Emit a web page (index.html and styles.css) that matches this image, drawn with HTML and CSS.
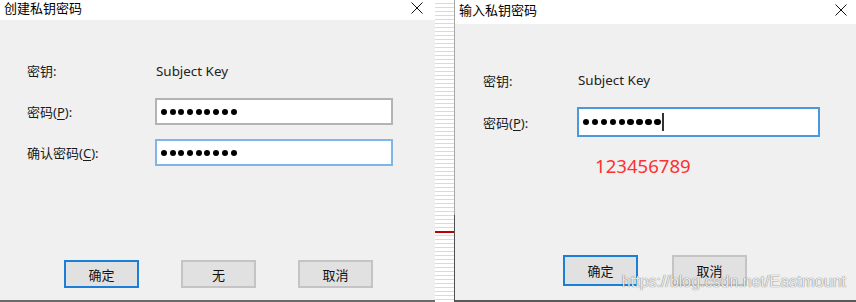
FILE: index.html
```html
<!DOCTYPE html>
<html lang="zh-CN">

<head>
    <meta charset="UTF-8">
    <meta name="viewport" content="width=device-width, initial-scale=1.0">
    <title>私钥密码</title>
    <link rel="stylesheet" href="styles.css">
</head>

<body>
    <div class="screen">
        <!-- 创建私钥密码 -->
        <div class="dialog create">
            <div class="titlebar">
                <span class="title">创建私钥密码</span>
                <svg class="close" width="12" height="12" viewBox="0 0 12 12">
                    <path d="M0.5 0.5 L11.5 11.5 M11.5 0.5 L0.5 11.5" stroke="#111" stroke-width="1" fill="none" />
                </svg>
            </div>
            <div class="body">
                <div class="fields">
                    <div class="label">密钥:</div>
                    <div class="value">Subject Key</div>
                    <div class="label">密码(<u>P</u>):</div>
                    <div class="field">
                        <span class="dot"></span><span class="dot"></span><span class="dot"></span>
                        <span class="dot"></span><span class="dot"></span><span class="dot"></span>
                        <span class="dot"></span><span class="dot"></span><span class="dot"></span>
                    </div>
                    <div class="label">确认密码(<u>C</u>):</div>
                    <div class="field focus">
                        <span class="dot"></span><span class="dot"></span><span class="dot"></span>
                        <span class="dot"></span><span class="dot"></span><span class="dot"></span>
                        <span class="dot"></span><span class="dot"></span><span class="dot"></span>
                    </div>
                </div>
                <div class="buttons">
                    <div class="btn default">确定</div>
                    <div class="btn">无</div>
                    <div class="btn">取消</div>
                </div>
            </div>
        </div>

        <div class="strip"></div>

        <!-- 输入私钥密码 -->
        <div class="dialog enter">
            <div class="titlebar">
                <span class="title">输入私钥密码</span>
                <svg class="close" width="12" height="12" viewBox="0 0 12 12">
                    <path d="M0.5 0.5 L11.5 11.5 M11.5 0.5 L0.5 11.5" stroke="#111" stroke-width="1" fill="none" />
                </svg>
            </div>
            <div class="body">
                <div class="fields">
                    <div class="label">密钥:</div>
                    <div class="value">Subject Key</div>
                    <div class="label">密码(<u>P</u>):</div>
                    <div class="field active">
                        <span class="dot"></span><span class="dot"></span><span class="dot"></span>
                        <span class="dot"></span><span class="dot"></span><span class="dot"></span>
                        <span class="dot"></span><span class="dot"></span><span class="dot"></span>
                        <span class="caret"></span>
                    </div>
                </div>
                <div class="hint">123456789</div>
                <div class="buttons">
                    <div class="btn default">确定</div>
                    <div class="btn">取消</div>
                </div>
            </div>
            <div class="watermark">https://blog.csdn.net/Eastmount</div>
        </div>
    </div>
</body>

</html>
```

FILE: styles.css
```css
* {
    padding: 0;
    margin: 0;
    box-sizing: border-box;
}

body {
    font-family: "Noto Sans", "Noto Sans CJK SC", sans-serif;
    font-size: 13px;
    color: #1a1a1a;
    background-color: #fff;
}

.screen {
    display: flex;
    width: 856px;
    height: 302px;
    overflow: hidden;
}

.dialog {
    display: flex;
    flex-direction: column;
    height: 302px;
    background-color: #f0f0f0;
}

.create {
    width: 435px;
    border-bottom: 2px solid #6a6a6a;
}

.enter {
    flex: 1;
    position: relative;
    border-bottom: 2px solid #5a5a5a;
}

.titlebar {
    display: flex;
    justify-content: space-between;
    background-color: #fff;
    color: #000;
}

.create .titlebar {
    height: 20px;
    padding: 0 12px 0 4px;
}

.create .title {
    line-height: 17px;
}

.create .close {
    margin-top: 2px;
}

.enter .titlebar {
    height: 24px;
    padding: 0 9px 0 4px;
}

.enter .title {
    line-height: 20px;
}

.enter .close {
    margin-top: 4px;
}

.body {
    flex: 1;
    display: flex;
    flex-direction: column;
}

.fields {
    display: grid;
    align-items: center;
}

.create .fields {
    grid-template-columns: 128px 238px;
    grid-auto-rows: 27px;
    row-gap: 14px;
    padding: 37px 0 0 27px;
}

.enter .fields {
    grid-template-columns: 94px 243px;
    grid-auto-rows: 30px;
    row-gap: 12px;
    padding: 41px 0 0 28px;
}

.value {
    padding-left: 1px;
    font-size: 13.4px;
    color: #222;
}

.label u {
    text-underline-offset: 2px;
}

.field {
    display: flex;
    align-items: center;
    height: 100%;
    padding-left: 4px;
    background-color: #fff;
    border: 2px solid #b3b3b3;
}

.field.focus {
    border-color: #7fb6ea;
}

.field.active {
    border-color: #4b98de;
}

.dot {
    display: inline-block;
    width: 6px;
    height: 6px;
    margin-right: 2.7px;
    border-radius: 50%;
    background-color: #000;
}

.active .dot {
    width: 6.4px;
    height: 6.4px;
    margin-right: 2.5px;
}

.caret {
    display: inline-block;
    width: 1.5px;
    height: 18px;
    margin-left: -1px;
    background-color: #333;
}

.hint {
    margin: 17px 0 0 140px;
    font-size: 18.6px;
    line-height: 24px;
    color: #ff3030;
}

.buttons {
    display: flex;
    margin-top: auto;
}

.create .buttons {
    gap: 42px;
    padding: 0 0 12px 64px;
}

.enter .buttons {
    gap: 34px;
    padding: 0 0 14px 108px;
}

.btn {
    display: flex;
    justify-content: center;
    align-items: center;
    width: 75px;
    background-color: #e1e1e1;
    border: 2px solid #c4c4c4;
    color: #111;
}

.create .btn {
    height: 28px;
}

.enter .btn {
    height: 31px;
}

.btn.default {
    border-color: #1a7fd6;
}

.strip {
    width: 20px;
    background:
        linear-gradient(#c00000, #c00000) 0 231px / 19px 2px no-repeat,
        linear-gradient(to bottom, #a6a6a6 215px, #4f4f4f 215px) right top / 1px 100% no-repeat,
        repeating-linear-gradient(to bottom, #fff 0 3px, #dadada 3px 4px);
}

.watermark {
    position: absolute;
    right: 10px;
    bottom: 10px;
    font-family: "Liberation Sans", Arial, sans-serif;
    font-size: 16px;
    line-height: 16px;
    color: rgba(255, 255, 255, .9);
    text-shadow: 0 0 1px rgba(0, 0, 0, .5), 0 0 1px rgba(0, 0, 0, .3);
}
```
